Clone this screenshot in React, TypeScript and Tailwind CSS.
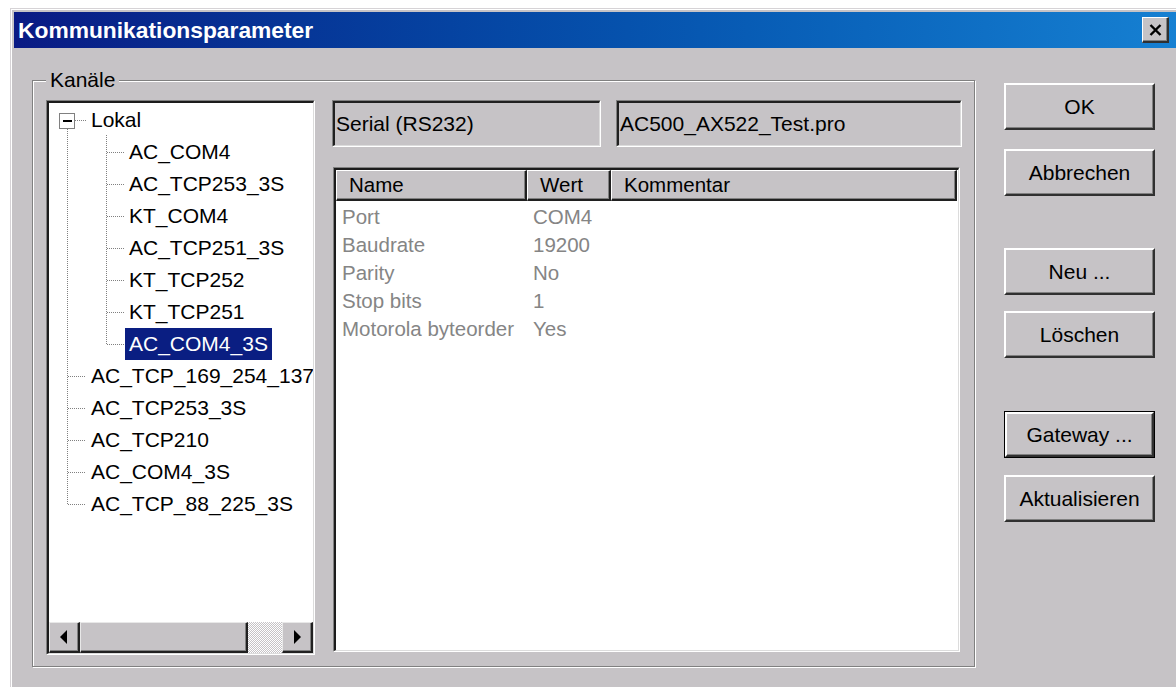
import React from "react";

type TreeRow = { label: string; depth: 0 | 1; selected?: boolean };

const treeRows: TreeRow[] = [
  { label: "Lokal", depth: 0 },
  { label: "AC_COM4", depth: 1 },
  { label: "AC_TCP253_3S", depth: 1 },
  { label: "KT_COM4", depth: 1 },
  { label: "AC_TCP251_3S", depth: 1 },
  { label: "KT_TCP252", depth: 1 },
  { label: "KT_TCP251", depth: 1 },
  { label: "AC_COM4_3S", depth: 1, selected: true },
  { label: "AC_TCP_169_254_137", depth: 0 },
  { label: "AC_TCP253_3S", depth: 0 },
  { label: "AC_TCP210", depth: 0 },
  { label: "AC_COM4_3S", depth: 0 },
  { label: "AC_TCP_88_225_3S", depth: 0 },
];

const params = [
  ["Port", "COM4"],
  ["Baudrate", "19200"],
  ["Parity", "No"],
  ["Stop bits", "1"],
  ["Motorola byteorder", "Yes"],
];

const ROW = 32;
const mid = (i: number) => 17.5 + i * ROW;

// dotted connector lines + the [-] expander of the tree
function TreeLines() {
  const dot = { stroke: "#808080", strokeWidth: 1, strokeDasharray: "1 1", shapeRendering: "crispEdges" as const };
  return (
    <svg className="pointer-events-none absolute left-0 top-0" width="264" height="440">
      <line x1="18.5" y1="26" x2="18.5" y2={mid(12)} {...dot} />
      <line x1="26" y1={mid(0)} x2="37" y2={mid(0)} {...dot} />
      {[8, 9, 10, 11, 12].map((i) => (
        <line key={i} x1="19" y1={mid(i)} x2="37" y2={mid(i)} {...dot} />
      ))}
      <line x1="57.5" y1="32" x2="57.5" y2={mid(7)} {...dot} />
      {[1, 2, 3, 4, 5, 6, 7].map((i) => (
        <line key={i} x1="58" y1={mid(i)} x2="75" y2={mid(i)} {...dot} />
      ))}
      <rect x="10.5" y="10.5" width="15" height="15" fill="#fff" stroke="#808080" shapeRendering="crispEdges" />
      <rect x="14" y="17" width="9" height="2" fill="#000" />
    </svg>
  );
}

function Arrow({ dir }: { dir: "left" | "right" }) {
  return (
    <svg width="8" height="14" viewBox="0 0 8 14">
      {dir === "left" ? <polygon points="7,0 7,14 0,7" fill="#000" /> : <polygon points="1,0 1,14 8,7" fill="#000" />}
    </svg>
  );
}

const raised =
  "border-t border-l border-t-[#e8e8e8] border-l-[#e8e8e8] border-r-2 border-b-2 border-r-[#202020] border-b-[#202020] shadow-[inset_-1px_-1px_0_#808080]";

function HScrollBar() {
  return (
    <div className="flex h-[31px] shrink-0">
      <div className={`flex w-[31px] items-center justify-center bg-[#c6c3c6] ${raised}`}>
        <Arrow dir="left" />
      </div>
      <div className={`w-[168px] bg-[#c6c3c6] ${raised}`} />
      <div className="flex-1 bg-[repeating-conic-gradient(#c6c3c6_0_25%,#ffffff_0_50%)] bg-[length:2px_2px]" />
      <div className={`flex w-[31px] items-center justify-center bg-[#c6c3c6] ${raised}`}>
        <Arrow dir="right" />
      </div>
    </div>
  );
}

function TreeView() {
  return (
    <div className="h-[555px] w-[269px] shrink-0 border border-t-[#808080] border-l-[#808080] border-r-white border-b-white">
      <div className="flex h-full flex-col border-t-2 border-l-2 border-r border-b border-t-[#1c1c1c] border-l-[#1c1c1c] border-r-[#dcdcdc] border-b-[#dcdcdc] bg-white">
        <div className="relative flex-1 overflow-hidden pt-[1px] text-[21px]">
          <TreeLines />
          {treeRows.map((r, i) => (
            <div
              key={i}
              className={`flex h-[32px] items-center whitespace-nowrap ${r.depth ? "pl-[76px]" : "pl-[38px]"}`}
            >
              <span
                className={`flex h-full items-center px-[4px] ${r.selected ? "bg-[#0a1e82] text-white" : ""}`}
              >
                {r.label}
              </span>
            </div>
          ))}
        </div>
        <HScrollBar />
      </div>
    </div>
  );
}

function Field({ className, children }: { className: string; children: React.ReactNode }) {
  return (
    <div className={`h-[47px] border border-t-[#808080] border-l-[#808080] border-r-white border-b-white ${className}`}>
      <div className="flex h-full items-center border-t-2 border-l-2 border-r border-b border-t-[#202020] border-l-[#202020] border-r-[#dcdcdc] border-b-[#dcdcdc] pl-[1px] text-[21px] whitespace-nowrap">
        {children}
      </div>
    </div>
  );
}

function HeaderCell({ className, children }: { className: string; children: React.ReactNode }) {
  return (
    <div
      className={`flex items-center border-t border-l border-t-white border-l-white border-r-2 border-b-2 border-r-[#202020] border-b-[#202020] bg-[#c6c3c6] pl-[12px] shadow-[inset_-1px_-1px_0_#808080] ${className}`}
    >
      {children}
    </div>
  );
}

function ParamList() {
  return (
    <div className="ml-[1px] mt-[20px] h-[485px] w-[627px] border border-t-[#808080] border-l-[#808080] border-r-white border-b-white">
      <div className="flex h-full flex-col border-t-2 border-l-2 border-r border-b border-t-[#1c1c1c] border-l-[#1c1c1c] border-r-[#dcdcdc] border-b-[#dcdcdc] bg-white">
        <div className="flex h-[31px] shrink-0 text-[20.5px]">
          <HeaderCell className="w-[191px]">Name</HeaderCell>
          <HeaderCell className="w-[84px]">Wert</HeaderCell>
          <HeaderCell className="w-[346px]">Kommentar</HeaderCell>
        </div>
        <div className="pt-[2px] text-[20.5px] text-[#858585]">
          {params.map(([name, value]) => (
            <div key={name} className="flex h-[28px] items-center whitespace-nowrap">
              <div className="w-[191px] pl-[6px]">{name}</div>
              <div className="pl-[6px]">{value}</div>
            </div>
          ))}
        </div>
      </div>
    </div>
  );
}

function DlgButton({
  children,
  className = "",
  isDefault = false,
}: {
  children: React.ReactNode;
  className?: string;
  isDefault?: boolean;
}) {
  return (
    <button className={`h-[47px] w-full ${isDefault ? "border border-black" : ""} ${className}`}>
      <div
        className={`flex h-full items-center justify-center border-t-2 border-l-2 border-t-white border-l-white border-r-2 border-b-2 border-r-[#303030] border-b-[#303030] bg-[#c6c3c6] text-[21px] shadow-[inset_-1px_-1px_0_#808080]`}
      >
        {children}
      </div>
    </button>
  );
}

export default function App() {
  return (
    <div className="h-[687px] w-[1176px] overflow-hidden bg-white font-['Liberation_Sans',Arial,sans-serif] text-black">
      <div className="ml-[10px] mt-[8px] h-[679px] border-t border-l border-t-[#d6d3d6] border-l-[#d6d3d6]">
        <div className="h-full border-t border-l border-t-white border-l-white bg-[#c6c3c6] pl-[2px] pt-[2px]">
          {/* caption bar */}
          <div className="flex h-[36px] items-center justify-between bg-linear-to-r from-[#0a1a84] to-[#1680d2]">
            <span className="pl-[4px] text-[22.8px] font-bold text-white">Kommunikationsparameter</span>
            <div className="mr-[7px] flex h-[26px] w-[27px] items-center justify-center border-t border-l border-t-white border-l-white border-r-2 border-b-2 border-r-[#303030] border-b-[#303030] bg-[#c6c3c6] shadow-[inset_-1px_-1px_0_#808080]">
              <svg width="13" height="12" viewBox="0 0 13 12">
                <path d="M1.5 1 L11.5 11 M11.5 1 L1.5 11" stroke="#000" strokeWidth="2.4" />
              </svg>
            </div>
          </div>

          <div className="flex items-start pl-[18px] pt-[22px]">
            <fieldset className="w-[943px] border border-t-[#808080] border-l-[#808080] border-r-[#808080] border-b-[#808080] px-[13px] pl-[13px] pr-[12px] pt-[10px] pb-[11px] shadow-[1px_1px_0_#fff,inset_1px_1px_0_#fff]">
              <legend className="bg-[#c6c3c6] px-[4px] text-[21px] leading-[20px]">Kanäle</legend>
              <div className="flex gap-[17px]">
                <TreeView />
                <div className="flex w-[630px] flex-col">
                  <div className="flex gap-[15px]">
                    <Field className="w-[269px]">Serial (RS232)</Field>
                    <Field className="w-[346px]">AC500_AX522_Test.pro</Field>
                  </div>
                  <ParamList />
                </div>
              </div>
            </fieldset>

            <div className="ml-[29px] mt-[13px] flex w-[151px] flex-col">
              <DlgButton>OK</DlgButton>
              <DlgButton className="mt-[19px]">Abbrechen</DlgButton>
              <DlgButton className="mt-[52px]">Neu ...</DlgButton>
              <DlgButton className="mt-[16px]">Löschen</DlgButton>
              <DlgButton className="mt-[53px]" isDefault>
                Gateway ...
              </DlgButton>
              <DlgButton className="mt-[17px]">Aktualisieren</DlgButton>
            </div>
          </div>
        </div>
      </div>
    </div>
  );
}
